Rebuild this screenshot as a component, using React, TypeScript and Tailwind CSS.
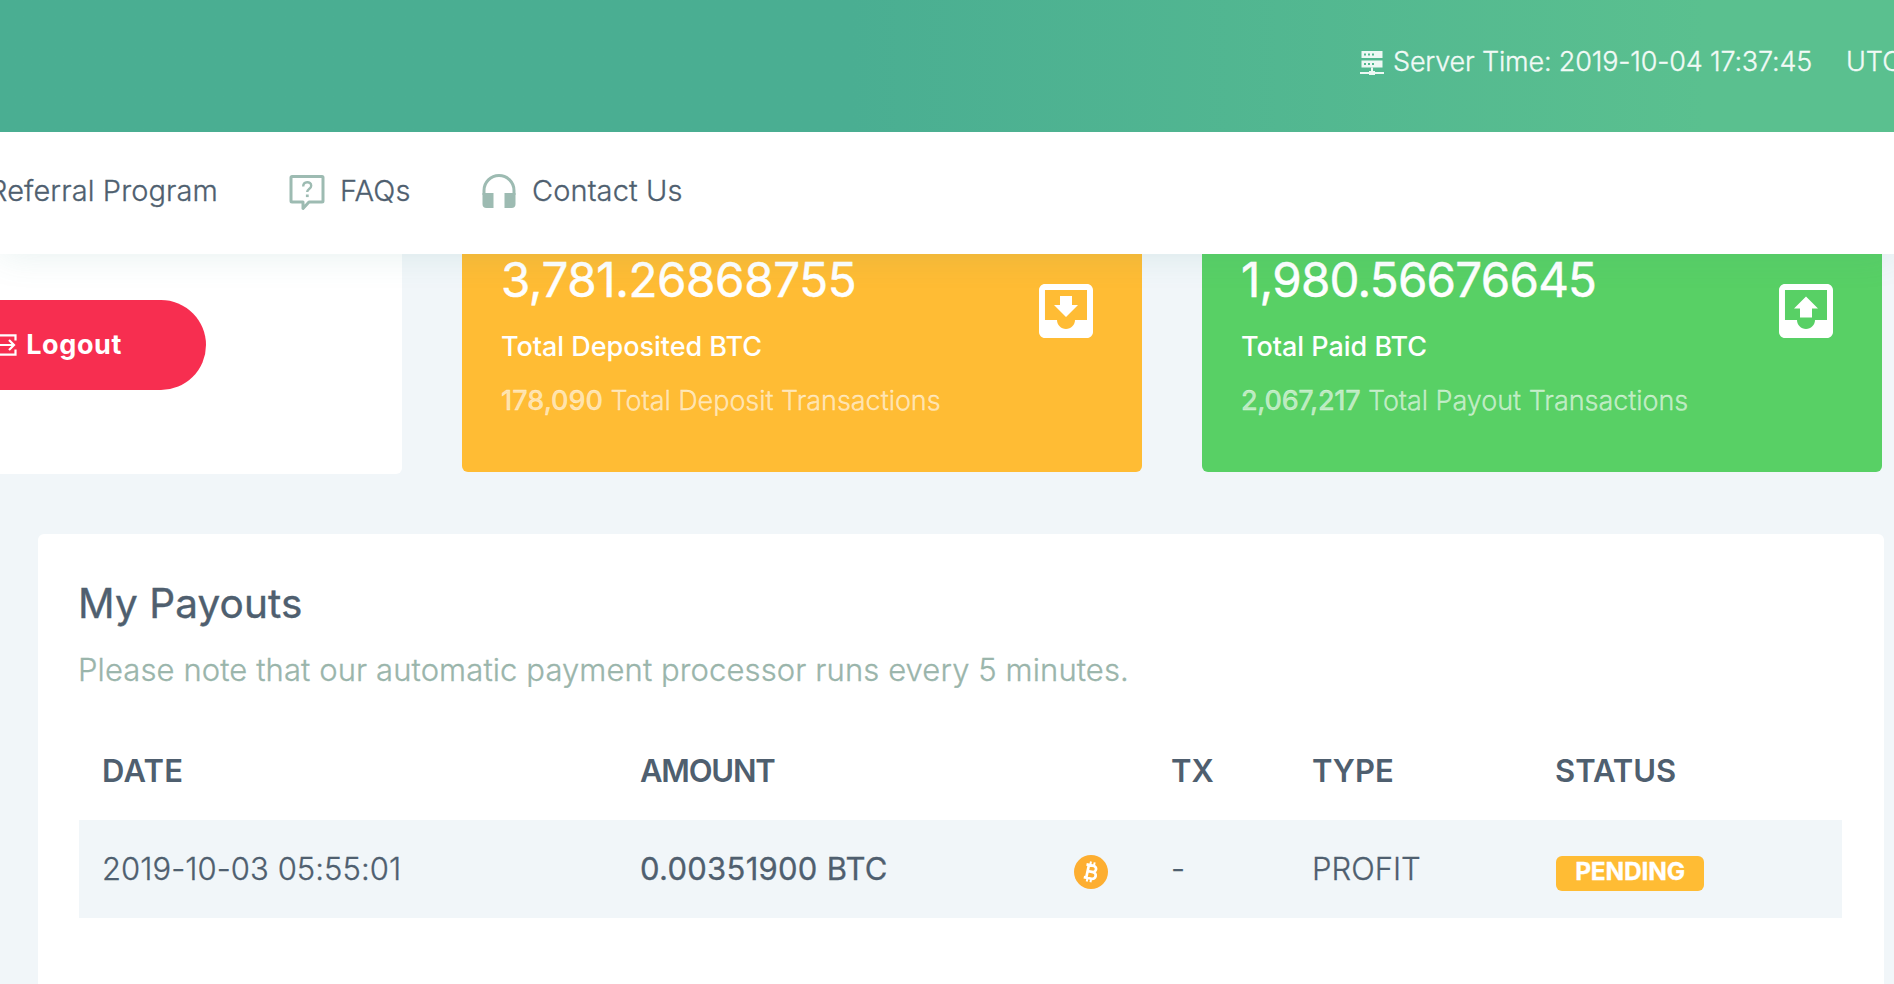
import React from 'react'
import { MdMoveToInbox } from 'react-icons/md'

const ServerIcon = () => (
    <svg className="shrink-0" width="24" height="24" viewBox="0 0 24 24" fill="currentColor">
        <path fillRule="evenodd" d="M1.500 0h21v7h-21zM4 2.500v2h2v-2zM8 2.500v2h2v-2zM12 2.500v2h2v-2z" />
        <path fillRule="evenodd" d="M1.500 9.500h21v7h-21zM4 12v2h2v-2zM8 12v2h2v-2zM12 12v2h2v-2z" />
        <path d="M11 16.500h2v3.500h2v1h9v2h-9v1h-6v-1h-9v-2h9v-1h2z" />
    </svg>
)

const FaqIcon = () => (
    <svg width="36" height="36" viewBox="0 0 36 36" fill="none" stroke="currentColor" strokeWidth="3">
        <path d="M3 1.500h30a1 1 0 0 1 1 1v23.500a1 1 0 0 1-1 1h-13l-6 6.500v-6.500h-11a1 1 0 0 1-1-1v-23.500a1 1 0 0 1 1-1z" strokeLinejoin="round" />
        <path d="M14.200 11.500c0-5.500 8-5.500 8-.8 0 3.300-4 3.300-4 6.300" strokeWidth="2.400" />
        <path d="M16.900 19.500h2.800v2.600h-2.800z" fill="currentColor" stroke="none" />
    </svg>
)

const HeadphonesIcon = () => (
    <svg width="34" height="34" viewBox="0 0 34 34" fill="currentColor">
        <path d="M2 21v-4.500a15 15 0 0 1 30 0v4.500" fill="none" stroke="currentColor" strokeWidth="3" />
        <path d="M.500 19h11v15h-7a4 4 0 0 1-4-4z" />
        <path d="M33.500 19h-11v15h7a4 4 0 0 0 4-4z" />
    </svg>
)

const ExitIcon = () => (
    <svg width="26" height="22" viewBox="0 0 26 22" fill="none" stroke="currentColor" strokeWidth="2.200">
        <path d="M4 7v-5.700h20.500v5.200M4 15v5.700h20.500v-5.200" />
        <path d="M0 11h22.500M18 6l5 5-5 5" />
    </svg>
)

const OutboxIcon = () => (
    <svg width="72" height="72" viewBox="0 0 24 24" fill="currentColor">
        <path d="M19 3H4.990c-1.110 0-1.980.9-1.980 2L3 19c0 1.100.88 2 1.990 2H19c1.100 0 2-.9 2-2V5c0-1.100-.9-2-2-2zm0 12h-4c0 1.660-1.350 3-3 3s-3-1.340-3-3H4.990V5H19v10z" />
        <path d="M8 11.200h2v3h4v-3h2l-4-4z" />
    </svg>
)

const BitcoinIcon = () => (
    <svg width="34" height="34" viewBox="0 0 34 34">
        <circle cx="17" cy="17" r="17" fill="#fdae31" />
        <g transform="rotate(12 17 17)" fill="none" stroke="#fff">
            <path d="M13.500 10.500v13M11 10.500h7.300a3 3 0 0 1 0 6.200h-4.800M13.500 16.700h5.500a3.400 3.400 0 0 1 0 6.800h-8" strokeWidth="2.700" />
            <path d="M14.800 6.800v3.500M18.600 6.800v3.500M14.800 23.500v3.700M18.600 23.500v3.700" strokeWidth="2" />
        </g>
    </svg>
)

const StatCard = ({ color, amount, label, count, text, icon }) => (
    <div className={`flex h-[217.500px] w-[680px] shrink-0 justify-between rounded-b-md pl-[39px] text-white ${color}`}>
        <div className="whitespace-nowrap pt-0.5">
            {amount}
            <p className="mt-[27px] text-[27px] font-medium leading-8 tracking-[-0.03px]">{label}</p>
            <p className="mt-[22px] text-[27px] font-light leading-8 tracking-[-0.05px] text-white/60 [-webkit-text-stroke:0.3px]">
                {count} {text}
            </p>
        </div>
        <div className="pr-10 pt-[21px]">{icon}</div>
    </div>
)

const columns = 'grid grid-cols-[538px_434px_97px_141px_243px_1fr] items-center pl-[23px] h-[98px] text-[31px]'

const App = () => {
    return (
        <div className="flex h-[984px] w-[1894px] flex-col overflow-hidden bg-[#f1f6f9] font-['Inter',sans-serif] text-[#4f5f6f]">
            <header className="relative z-20 flex h-[132px] shrink-0 items-center bg-linear-to-r from-[#4aae92] from-45% to-[#5ac08f] to-90% pb-[7px] pl-[1360px] text-[27px] font-light text-white/90 [-webkit-text-stroke:0.3px]">
                <ServerIcon />
                <span className="ml-[9px] w-[453px] shrink-0 whitespace-nowrap tracking-[-0.18px]">Server Time: 2019-10-04 17:37:45</span>
                <span className="whitespace-nowrap">UTC</span>
            </header>

            <nav className="relative z-10 flex h-[122px] shrink-0 items-center whitespace-nowrap bg-white pb-[5px] text-[29px] font-light tracking-[0.1px] shadow-[0_0_35px_rgba(74,150,140,0.14)] [-webkit-text-stroke:0.3px]">
                <a className="flex w-[218px] justify-end">Referral Program</a>
                <a className="ml-[71px] flex w-[193px] items-center">
                    <span className="mr-[15px] mt-1 text-[#9dbbb2]"><FaqIcon /></span>
                    FAQs
                </a>
                <a className="flex items-center">
                    <span className="mr-[16px] text-[#9dbbb2]"><HeadphonesIcon /></span>
                    Contact Us
                </a>
            </nav>

            <section className="flex shrink-0 gap-[60px]">
                <div className="h-[220px] w-[402px] shrink-0 rounded-br-md bg-white pt-[46px]">
                    <button className="flex h-[90px] w-[206px] items-center justify-end rounded-r-full bg-[#f72e50] pr-[84px] text-[27px] font-bold tracking-[0.6px] text-white">
                        <span className="mr-[9px]"><ExitIcon /></span>
                        Logout
                    </button>
                </div>
                <StatCard
                    color="bg-[#ffbc34]"
                    amount={<p className="text-[47.5px] leading-[48px] tracking-[-0.4px] [-webkit-text-stroke:0.5px]">3,781.26868755</p>}
                    label="Total Deposited BTC"
                    count={<span className="font-medium tracking-normal">178,090</span>}
                    text="Total Deposit Transactions"
                    icon={<MdMoveToInbox size={72} />}
                />
                <StatCard
                    color="bg-[#58d065]"
                    amount={<p className="text-[47.5px] leading-[48px] tracking-[-0.75px] [-webkit-text-stroke:0.5px]">1,980.56676645</p>}
                    label="Total Paid BTC"
                    count={<span className="font-medium tracking-[-0.3px]">2,067,217</span>}
                    text="Total Payout Transactions"
                    icon={<OutboxIcon />}
                />
            </section>

            <section className="ml-[38px] mt-[60px] w-[1846px] flex-1 rounded-t-md bg-white pl-[41px] pr-[42px] pt-[46px]">
                <h2 className="-ml-px text-[40.5px] leading-[48px] tracking-[0.1px] [-webkit-text-stroke:0.4px]">My Payouts</h2>
                <p className="-ml-px mt-[22px] text-[31px] font-light leading-10 tracking-[0.1px] text-[#9ab5ab] [-webkit-text-stroke:0.3px]">
                    Please note that our automatic payment processor runs every 5 minutes.
                </p>
                <div className="mt-[32px]">
                    <div className={`${columns} pt-px font-semibold`}>
                        <span className="tracking-[0.3px]">DATE</span>
                        <span className="col-span-2 tracking-[-1.2px]">AMOUNT</span>
                        <span>TX</span>
                        <span>TYPE</span>
                        <span>STATUS</span>
                    </div>
                    <div className={`${columns} bg-[#f1f6f9] pt-px font-light [-webkit-text-stroke:0.3px]`}>
                        <span className="tracking-[0.05px]">2019-10-03 05:55:01</span>
                        <span className="font-normal tracking-[0.27px]">0.00351900 BTC</span>
                        <span className="mt-1"><BitcoinIcon /></span>
                        <span>-</span>
                        <span>PROFIT</span>
                        <span className="ml-px mt-[7px] flex h-[35px] w-[148px] items-center justify-center rounded-md bg-[#ffbc34] pb-[3px] text-[24.5px] font-bold tracking-[-0.2px] text-white">
                            PENDING
                        </span>
                    </div>
                </div>
            </section>
        </div>
    )
}

export default App
